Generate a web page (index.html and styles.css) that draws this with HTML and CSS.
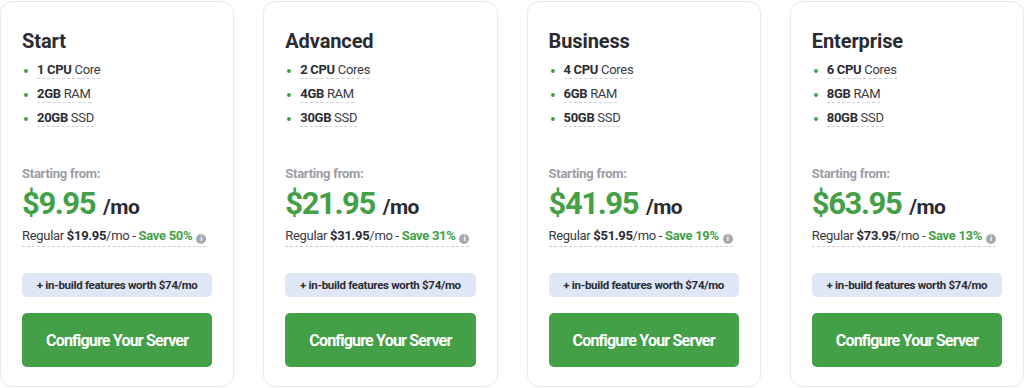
FILE: index.html
```html
<!DOCTYPE html>
<html lang="en">
<head>
    <meta charset="UTF-8">
    <meta name="viewport" content="width=device-width, initial-scale=1.0">
    <title>Server Plans</title>
    <link rel="stylesheet" href="styles.css">
</head>
<body>
    <div class="plans">
        <div class="card">
            <h2>Start</h2>
            <ul class="specs">
                <li><span><b>1 CPU</b> Core</span></li>
                <li><span><b>2GB</b> RAM</span></li>
                <li><span><b>20GB</b> SSD</span></li>
            </ul>
            <div class="from">Starting from:</div>
            <div class="price"><span class="amount">$9.95</span> <span class="per">/mo</span></div>
            <div class="regular"><span class="reg-line">Regular <b>$19.95</b>/mo - <span class="save">Save 50%</span> <i class="info">i</i></span></div>
            <div class="extras">+ in-build features worth $74/mo</div>
            <button class="configure">Configure Your Server</button>
        </div>
        <div class="card">
            <h2>Advanced</h2>
            <ul class="specs">
                <li><span><b>2 CPU</b> Cores</span></li>
                <li><span><b>4GB</b> RAM</span></li>
                <li><span><b>30GB</b> SSD</span></li>
            </ul>
            <div class="from">Starting from:</div>
            <div class="price"><span class="amount">$21.95</span> <span class="per">/mo</span></div>
            <div class="regular"><span class="reg-line">Regular <b>$31.95</b>/mo - <span class="save">Save 31%</span> <i class="info">i</i></span></div>
            <div class="extras">+ in-build features worth $74/mo</div>
            <button class="configure">Configure Your Server</button>
        </div>
        <div class="card">
            <h2>Business</h2>
            <ul class="specs">
                <li><span><b>4 CPU</b> Cores</span></li>
                <li><span><b>6GB</b> RAM</span></li>
                <li><span><b>50GB</b> SSD</span></li>
            </ul>
            <div class="from">Starting from:</div>
            <div class="price"><span class="amount">$41.95</span> <span class="per">/mo</span></div>
            <div class="regular"><span class="reg-line">Regular <b>$51.95</b>/mo - <span class="save">Save 19%</span> <i class="info">i</i></span></div>
            <div class="extras">+ in-build features worth $74/mo</div>
            <button class="configure">Configure Your Server</button>
        </div>
        <div class="card">
            <h2>Enterprise</h2>
            <ul class="specs">
                <li><span><b>6 CPU</b> Cores</span></li>
                <li><span><b>8GB</b> RAM</span></li>
                <li><span><b>80GB</b> SSD</span></li>
            </ul>
            <div class="from">Starting from:</div>
            <div class="price"><span class="amount">$63.95</span> <span class="per">/mo</span></div>
            <div class="regular"><span class="reg-line">Regular <b>$73.95</b>/mo - <span class="save">Save 13%</span> <i class="info">i</i></span></div>
            <div class="extras">+ in-build features worth $74/mo</div>
            <button class="configure">Configure Your Server</button>
        </div>
    </div>
</body>
</html>
```
FILE: styles.css
```css
body {
    margin: 0;
    background: #fff;
    font-family: Roboto, "Liberation Sans", sans-serif;
    color: #2b2b33;
    overflow: hidden;
}
.plans {
    display: flex;
    gap: 29px;
    padding-top: 1px;
}
.card {
    flex: 1;
    height: 386px;
    box-sizing: border-box;
    border: 1px solid #e7e7ef;
    border-radius: 12px;
    padding: 27px 21px 0;
}
h2 {
    margin: 0;
    font-size: 20px;
    line-height: 24px;
    font-weight: 700;
    letter-spacing: -0.1px;
}
.specs {
    list-style: none;
    margin: 5px 0 0;
    padding: 0;
}
.specs li {
    position: relative;
    padding-left: 15px;
    font-size: 13px;
    line-height: 24px;
    letter-spacing: -0.3px;
    color: #3a3a42;
}
.specs li::before {
    content: "";
    position: absolute;
    left: 2px;
    top: 11px;
    width: 4px;
    height: 4px;
    border-radius: 50%;
    background: #43a047;
}
.specs li span {
    border-bottom: 1px dashed #cfcfd6;
    padding-bottom: 1px;
}
.specs b {
    color: #2b2b33;
}
.from {
    margin-top: 34px;
    font-size: 13px;
    line-height: 20px;
    font-weight: 700;
    letter-spacing: -0.25px;
    color: #9c9ca6;
}
.price {
    height: 36px;
    line-height: 36px;
    margin-top: 2px;
}
.amount {
    font-size: 31px;
    font-weight: 700;
    letter-spacing: -1.4px;
    color: #43a047;
}
.per {
    margin-left: 4px;
    font-size: 21px;
    font-weight: 700;
    letter-spacing: -0.6px;
    color: #2b2b33;
}
.regular {
    margin-top: 5px;
    font-size: 13px;
    line-height: 18px;
    letter-spacing: -0.3px;
    color: #3a3a42;
    white-space: nowrap;
}
.reg-line {
    display: inline-block;
    border-bottom: 1px dashed #cfcfd6;
    padding-bottom: 1px;
}
.regular b {
    color: #2b2b33;
}
.save {
    color: #43a047;
    font-weight: 700;
}
.info {
    display: inline-block;
    width: 10px;
    height: 10px;
    margin-left: 1px;
    border-radius: 50%;
    background: #a8a8b0;
    color: #fff;
    font-size: 8px;
    line-height: 10px;
    text-align: center;
    font-style: normal;
    font-weight: 700;
    letter-spacing: 0;
    vertical-align: -1px;
}
.extras {
    margin-top: 26px;
    height: 24px;
    line-height: 24px;
    border-radius: 5px;
    background: #dfe7f6;
    font-size: 11.5px;
    font-weight: 700;
    letter-spacing: -0.3px;
    text-align: center;
    color: #2b2b33;
    white-space: nowrap;
}
.configure {
    display: block;
    width: 100%;
    height: 54px;
    margin-top: 16px;
    border: none;
    border-radius: 5px;
    background: #43a047;
    color: #fff;
    font-family: inherit;
    font-size: 16px;
    font-weight: 700;
    letter-spacing: -0.8px;
}
```
